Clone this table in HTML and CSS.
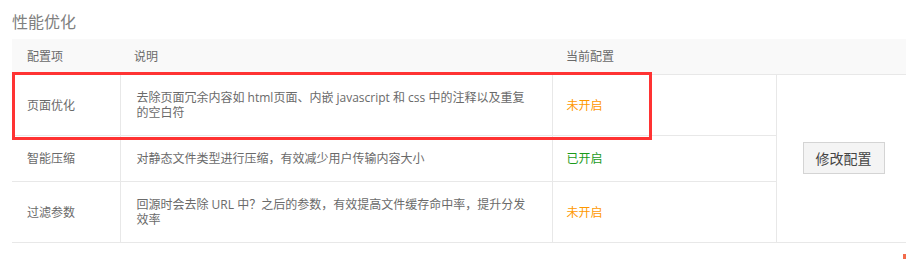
FILE: index.html
```html
<!DOCTYPE html>
<html lang="zh-CN">
<head>
<meta charset="utf-8">
<link rel="stylesheet" href="styles.css">
</head>
<body>
<div class="page">
  <h2 class="title">性能优化</h2>
  <div class="table-wrap">
    <table class="cfg">
      <colgroup>
        <col class="c1"><col class="c2"><col class="c3"><col class="c4">
      </colgroup>
      <thead>
        <tr><th>配置项</th><th>说明</th><th>当前配置</th><th></th></tr>
      </thead>
      <tbody>
        <tr class="r-tall">
          <td class="name">页面优化</td>
          <td class="desc">去除页面冗余内容如 html页面、内嵌 javascript 和 css 中的注释以及重复的空白符</td>
          <td class="state off">未开启</td>
          <td class="action" rowspan="3"><button class="btn">修改配置</button></td>
        </tr>
        <tr class="r-short">
          <td class="name">智能压缩</td>
          <td class="desc">对静态文件类型进行压缩，有效减少用户传输内容大小</td>
          <td class="state on">已开启</td>
        </tr>
        <tr class="r-tall">
          <td class="name">过滤参数</td>
          <td class="desc">回源时会去除 URL 中？之后的参数，有效提高文件缓存命中率，提升分发效率</td>
          <td class="state off">未开启</td>
        </tr>
      </tbody>
    </table>
    <div class="highlight"></div>
  </div>
</div>
<div class="corner-mark"></div>
</body>
</html>
```
FILE: styles.css
```css
html, body {
  margin: 0;
  padding: 0;
  background: #fff;
}
body {
  font-family: "Open Sans", "Noto Sans CJK SC", "Noto Sans", sans-serif;
  color: #6a6a6a;
  font-size: 12px;
  width: 906px;
  height: 259px;
  overflow: hidden;
  position: relative;
}
.page {
  padding: 0 0 0 12px;
}
.title {
  margin: 0;
  padding-top: 11px;
  height: 28px;
  font-size: 16px;
  line-height: 22px;
  font-weight: normal;
  color: #808080;
}
.table-wrap {
  position: relative;
  width: 894px;
}
.cfg {
  width: 894px;
  border-collapse: collapse;
  table-layout: fixed;
}
.c1 { width: 108px; }
.c2 { width: 432px; }
.c3 { width: 224px; }
.c4 { width: 130px; }
.cfg th {
  background: #f9f9f9;
  height: 35px;
  padding: 0 0 0 15px;
  text-align: left;
  font-weight: normal;
  color: #6a6a6a;
  line-height: 15px;
  border-bottom: 1px solid #e8e8e8;
}
.cfg th:nth-child(2) { padding-left: 14px; }
.cfg th:nth-child(3) { padding-left: 14px; }
.cfg td {
  padding: 0 15px;
  line-height: 15px;
  border-bottom: 1px solid #e8e8e8;
  vertical-align: middle;
}
.cfg td + td { border-left: 1px solid #e8e8e8; }
.r-tall td { height: 60px; }
.r-short td { height: 45px; }
.cfg td.desc { padding-left: 16px; padding-right: 16px; }
.cfg td.state { padding-left: 14px; }
.state.off { color: #f90; }
.state.on { color: #1a9a1a; }
.cfg td.action {
  padding: 0;
  vertical-align: top;
  padding-top: 67px;
  padding-left: 26px;
  text-align: left;
}
.btn {
  width: 82px;
  height: 32px;
  background: #f4f4f4;
  border: 1px solid #d4d4d4;
  color: #444;
  font-family: inherit;
  font-size: 14px;
  padding: 0;
  cursor: pointer;
}
.highlight {
  position: absolute;
  left: 0;
  top: 33px;
  width: 634px;
  height: 62px;
  border: 3px solid #f33;
  pointer-events: none;
}
.corner-mark {
  position: absolute;
  right: 0;
  top: 254px;
  width: 3px;
  height: 5px;
  background: #f26b4b;
}
```
